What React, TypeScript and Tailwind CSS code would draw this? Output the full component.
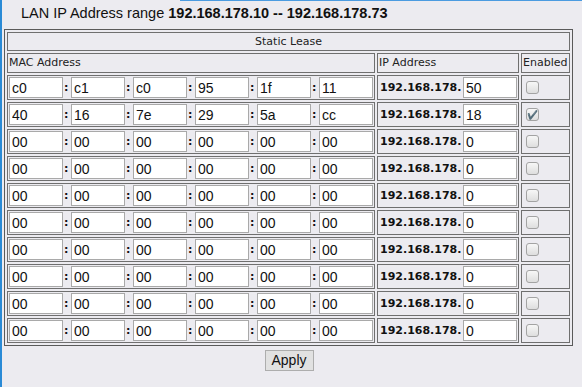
import React from 'react';

interface Lease {
  mac: string[];
  ip: string;
  enabled: boolean;
}

const leases: Lease[] = [
  { mac: ['c0', 'c1', 'c0', '95', '1f', '11'], ip: '50', enabled: false },
  { mac: ['40', '16', '7e', '29', '5a', 'cc'], ip: '18', enabled: true },
  ...Array.from({ length: 8 }, () => ({ mac: ['00', '00', '00', '00', '00', '00'], ip: '0', enabled: false })),
];

const verdana = "font-['DejaVu_Sans',Verdana,sans-serif]";
const arial = "font-['Liberation_Sans',Arial,sans-serif]";

function Field({ value, width }: { value: string; width: string }) {
  return (
    <input
      defaultValue={value}
      className={`${width} h-[21px] border border-[#a9a9a9] bg-white px-[2px] text-[14px] leading-[19px] text-[#111] outline-none font-['Liberation_Sans',Arial,sans-serif]`}
    />
  );
}

function Checkbox({ checked }: { checked: boolean }) {
  return (
    <span className="flex h-[13px] w-[13px] items-center justify-center rounded-[3px] border border-[#a3a3a3] bg-gradient-to-b from-[#f7f7f7] to-[#dedede] text-[9px] leading-none text-[#4a4a4a]">
      {checked ? '✔' : ''}
    </span>
  );
}

export default function App() {
  return (
    <div className="relative h-[387px] w-[582px] overflow-hidden bg-[#ecebf0]">
      {/* window edges */}
      <div className="absolute left-0 top-0 h-full w-[2px] bg-[#2a8ad6]" />
      <div className="absolute left-[180px] right-0 top-0 h-[1px] bg-[#4b9be0]" />

      <div className={`pl-[21px] pt-[5px] text-[14.5px] leading-[17px] text-[#111] ${arial}`}>
        LAN IP Address range <b>192.168.178.10 -- 192.168.178.73</b>
      </div>

      <table className="ml-[4px] mt-[7px] table-fixed border-separate border-spacing-[2px] border border-[#5a5a5a]">
        <colgroup>
          <col className="w-[368px]" />
          <col className="w-[142px]" />
          <col className="w-[49px]" />
        </colgroup>
        <tbody>
          <tr>
            <td colSpan={3} className={`h-[19px] border border-[#6f6f6f] p-0 text-center text-[11px] leading-[17px] text-[#222] ${verdana}`}>
              Static Lease
            </td>
          </tr>
          <tr>
            <td className={`h-[20px] border border-[#6f6f6f] px-[1px] py-0 text-[11px] leading-[18px] text-[#222] ${verdana}`}>
              MAC Address
            </td>
            <td className={`h-[20px] border border-[#6f6f6f] px-[1px] py-0 text-[11px] leading-[18px] text-[#222] ${verdana}`}>
              IP Address
            </td>
            <td className={`h-[20px] border border-[#6f6f6f] px-[1px] py-0 text-[11px] leading-[18px] text-[#222] ${verdana}`}>
              Enabled
            </td>
          </tr>
          {leases.map((l, i) => (
            <tr key={i}>
              <td className="h-[25px] border border-[#6f6f6f] p-[1px]">
                <div className="flex items-center">
                  {l.mac.map((m, j) => (
                    <React.Fragment key={j}>
                      {j > 0 && (
                        <span className={`w-[8px] pl-[1px] text-[11px] font-bold leading-none text-[#111] ${verdana}`}>:</span>
                      )}
                      <Field value={m} width="w-[54px]" />
                    </React.Fragment>
                  ))}
                </div>
              </td>
              <td className="h-[25px] border border-[#6f6f6f] p-[1px]">
                <div className="flex items-center pl-[1px]">
                  <span className={`w-[83px] text-[11px] font-bold leading-none text-[#111] ${verdana}`}>192.168.178.</span>
                  <Field value={l.ip} width="w-[54px]" />
                </div>
              </td>
              <td className="h-[25px] border border-[#6f6f6f] py-0 pl-[4px]">
                <Checkbox checked={l.enabled} />
              </td>
            </tr>
          ))}
        </tbody>
      </table>

      <div className="mt-[4px] flex justify-center pr-[4px]">
        <button className={`h-[21px] w-[49px] border border-[#adadad] bg-[#e1e1e1] text-[14px] leading-[19px] text-[#111] ${arial}`}>
          Apply
        </button>
      </div>
    </div>
  );
}
